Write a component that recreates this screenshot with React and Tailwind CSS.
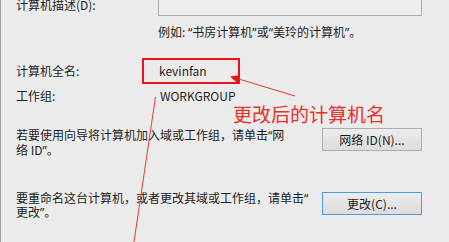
import React from 'react';

// narrow latin quotes, like YaHei renders them
const Q = ({ children }) => <span className="font-['Noto_Sans',sans-serif]">{children}</span>;

const Annotations = () => (
  <svg className="absolute inset-0 pointer-events-none" width="449" height="242" viewBox="0 0 449 242">
    <line x1="294" y1="96" x2="236" y2="78.5" stroke="#e53935" strokeWidth="1" />
    <polygon points="229,76.5 239,75.2 236.6,83.2" fill="#e8141a" />
    <line x1="154.5" y1="97" x2="133" y2="242" stroke="#e53935" strokeWidth="1" />
  </svg>
);

const WinButton = ({ children, focused }) => (
  <button
    className={`w-[100px] h-[23px] text-[12px] text-[#1b1b1b] bg-gradient-to-b from-[#ececec] to-[#dcdcdc] border ${
      focused ? 'border-[#4a9ee6]' : 'border-[#adadad]'
    }`}
  >
    {children}
  </button>
);

export default function App() {
  return (
    <div className="relative w-[449px] h-[242px] overflow-hidden bg-[#ebebeb] border-l border-[#a3a3a3] text-[12px] text-[#1e1e1e] font-['Noto_Sans_CJK_SC','Noto_Sans',sans-serif]">
      <div className="pl-[15px] pr-[27px]">
        {/* description row */}
        <div className="flex items-start">
          <div className="w-[142px] leading-[16px] -mt-[3px]">计算机描述(D):</div>
          <div className="w-[264px] h-[24px] -mt-[8px] border border-[#acacac] bg-[#eeeeee]" />
        </div>
        <div className="pl-[142px] mt-[8px] leading-[16px]">
          例如: <Q>“</Q>书房计算机<Q>”</Q>或<Q>“</Q>美玲的计算机<Q>”</Q>。
        </div>

        {/* full name row */}
        <div className="flex items-center mt-[17px]">
          <div className="w-[142px] leading-[16px]">计算机全名:</div>
          <div className="-ml-[16px] w-[98px] h-[26px] border-2 border-[#e8141a] pl-[15px] flex items-center leading-[16px]">
            kevinfan
          </div>
        </div>

        {/* workgroup row */}
        <div className="flex items-center mt-[4px] leading-[16px]">
          <div className="w-[144px]">工作组:</div>
          <div>WORKGROUP</div>
        </div>

        <div className="pl-[217px] text-[19px] leading-[20px] text-[#e8302a]">更改后的计算机名</div>

        {/* network id row */}
        <div className="flex justify-between items-start mt-[4px]">
          <div className="leading-[14px]">
            若要使用向导将计算机加入域或工作组，请单击<Q>“</Q>网
            <br />
            络 ID<Q>”</Q>。
          </div>
          <WinButton>网络 ID(N)...</WinButton>
        </div>

        {/* rename row */}
        <div className="flex justify-between items-start mt-[33px]">
          <div className="leading-[13px]">
            要重命名这台计算机，或者更改其域或工作组，请单击<Q>“</Q>
            <br />
            更改<Q>”</Q>。
          </div>
          <div className="mt-[1px]">
            <WinButton focused>更改(C)...</WinButton>
          </div>
        </div>
      </div>
      <Annotations />
    </div>
  );
}
